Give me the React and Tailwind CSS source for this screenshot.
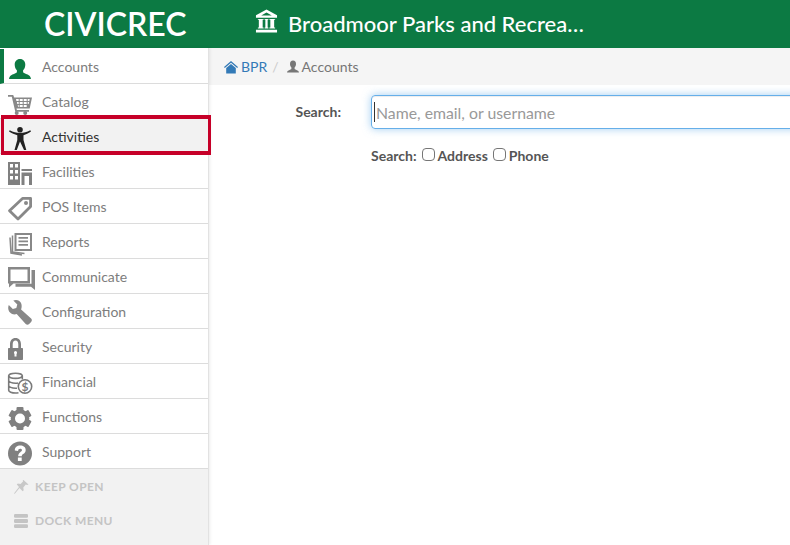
const G = "#888888";
const Svg = ({ children, color = G }) => (
  <span className="flex h-[26px] w-[26px] shrink-0">
    <svg width="26" height="26" viewBox="0 0 26 26" fill={color} className="overflow-visible">{children}</svg>
  </span>
);
const User = ({ color }) => (
  <Svg color={color}>
    <path d="M12 6c3.400 0 5.300 2.500 5.300 5.800 0 2.200-.9 4.300-2.200 5.500v1.700c0 .9 2.500 1.700 4.500 2.600 1.700.8 3 1.800 3.400 4.400H1c.4-2.600 1.700-3.600 3.400-4.400 2-.9 4.500-1.700 4.500-2.600v-1.700c-1.300-1.200-2.200-3.300-2.200-5.500C6.700 8.500 8.600 6 12 6z" />
  </Svg>
);
const Cart = () => (
  <Svg>
    <path d="M0 7h5.200l1 2.500H24l-2.300 11H8.500l.4 1.500H21v1.800H7.300L3.800 8.800H0z" />
    <path fill="#fff" d="M8 11h2.700v2H8.400zM11.700 11h3v2h-3zM15.700 11h3v2h-3zM19.700 11h2l-.4 2h-1.600zM8.900 14h1.800v2H9.300zM11.700 14h3v2h-3zM15.700 14h3v2h-3zM19.700 14h1.400l-.4 2h-1zM9.700 17h1v2h-.6zM11.700 17h3v2h-3zM15.700 17h3v2h-3z" />
    <circle cx="8.700" cy="25" r="2" /><circle cx="17.200" cy="25" r="2" />
  </Svg>
);
const Person = () => (
  <Svg color="#222222">
    <circle cx="12" cy="6.800" r="2.800" />
    <path d="M1 8.500l.7-1.300c3.500 1.700 6.500 2.800 10.300 2.800s6.800-1.100 10.300-2.800l.7 1.300c-2.700 1.800-5 3-7.500 3.800v4.700l2.800 10h-2.300L12 18.500 8.800 27H6.500l2.800-10v-4.700C6.800 11.500 3.700 10.300 1 8.500z" />
  </Svg>
);
const Building = () => (
  <Svg color="#808080">
    <path fillRule="evenodd" d="M0 4h12v23H0zM2 6v3.500h3V6zM7 6v3.500h3V6zM2 12v3.500h3V12zM7 12v3.500h3V12zM2 18v3.500h3V18zM7 18v3.500h3V18z" />
    <path fillRule="evenodd" d="M13.500 11H24v2H13.500zM13.500 14.500H24V27h-3v-9h-4.500v9h-3z" />
  </Svg>
);
const Tag = () => (
  <Svg>
    <path d="M14.500 5.400h8.100v8.100L10 26 1.500 17.800z" fill="none" stroke={G} strokeWidth="2.800" strokeLinejoin="round" />
    <circle cx="18" cy="10" r="2" />
  </Svg>
);
const Report = () => (
  <Svg>
    <path fillRule="evenodd" d="M6.500 5H24v18H6.500zM8.500 7v14H22V7zM10.500 9H20v1.700h-9.500zM10.500 12.500H20v1.700h-9.500zM10.500 16H20v1.700h-9.500z" />
    <path d="M4.500 7.500v16.500l12 1.500M2 9.500l1 15.500 11 2" fill="none" stroke={G} strokeWidth="1.500" />
  </Svg>
);
const Chat = () => (
  <Svg>
    <path fillRule="evenodd" d="M0 4h22v16.500H5.500L1 24.500V20.500H0zM2.500 6.500v11.500h17V6.500z" />
    <path d="M23.500 7H27v20l-4-3.200H7.500v-3h16z" />
  </Svg>
);
const Wrench = () => (
  <Svg>
    <path d="M8 2c-1 0-2 .2-2.700.6l4 4-1 3.500-3.500 1-4-4C.4 8 .2 9 .2 10c0 4.500 4.300 7.500 8.500 6l9 10c1 1 2.500 1 3.400 0l2-2c1-1 1-2.400 0-3.400l-10-9C15 6.400 12.500 2 8 2z" />
  </Svg>
);
const Lock = () => (
  <Svg color="#808080">
    <path fillRule="evenodd" d="M2 15v-3.500C2 7.500 4 5 7.500 5S13 7.500 13 11.500V15h1c.6 0 1 .4 1 1v10c0 .6-.4 1-1 1H1c-.6 0-1-.4-1-1V16c0-.6.4-1 1-1zM4.700 15h5.600v-3.500C10.300 9 9.300 7.500 7.500 7.500S4.700 9 4.700 11.500z" />
    <rect x="6.500" y="19" width="2" height="4.500" fill="#fff" />
    <circle cx="7.500" cy="19.500" r="1.500" fill="#fff" />
  </Svg>
);
const Coins = () => (
  <Svg>
    <g fill="none" stroke="#7a7a7a" strokeWidth="1.600">
      <ellipse cx="7.500" cy="7.800" rx="6.800" ry="2.600" />
      <path d="M.7 7.800v14.500c0 1.400 3 2.700 6.800 2.700 1.200 0 2-.1 3-.3M14.300 7.800v3.500M.7 12.500c0 1.400 3 2.700 6.800 2.700 1 0 1.800-.1 2.500-.3M.7 17.500c0 1.400 3 2.700 6.800 2.700h1.500" />
      <circle cx="17" cy="18.500" r="6.700" />
    </g>
    <text x="17" y="22.700" textAnchor="middle" fontSize="12" fontWeight="700" fill="#7a7a7a" fontFamily="Lato, sans-serif">$</text>
  </Svg>
);
const Gear = () => (
  <Svg color="#808080">
    <circle cx="12" cy="15.500" r="9.300" />
    <rect x="8.500" y="4" width="7" height="23" rx="1" />
    <rect x="8.500" y="4" width="7" height="23" rx="1" transform="rotate(60 12 15.500)" />
    <rect x="8.500" y="4" width="7" height="23" rx="1" transform="rotate(120 12 15.500)" />
    <circle cx="12" cy="15.500" r="5" fill="#fff" />
  </Svg>
);
const Help = () => (
  <Svg color="#808080">
    <circle cx="12" cy="15.500" r="12" />
    <path d="M6.800 12.500C6.800 9.300 9 7.500 12.200 7.500c3.200 0 5.500 1.700 5.500 4.500 0 2.200-1.200 3.200-2.600 4.100-1 .7-1.300 1.200-1.300 2.200h-3.600c0-2.100.7-3.100 2.100-4.100 1-.7 1.700-1.200 1.700-2.100 0-.8-.7-1.400-1.800-1.400-1.200 0-2.100.7-2.100 2.300z" fill="#fff" />
    <rect x="9.900" y="19.500" width="3.800" height="3.500" fill="#fff" />
  </Svg>
);
const Pin = () => (
  <svg width="16" height="16" viewBox="0 0 16 16" fill="#c8c8c8"><path d="M9.500 1l5 4.500-1.300.6-1.400-.6-2.500 3 .4 2.700-1 1L5.500 9 1 14.500 0 15l.5-1.200L5 8 2.800 5.500l1-1 2.700.6 2.500-2.600-.2-1.300z" /></svg>
);
const Bars = () => (
  <svg width="14" height="14" viewBox="0 0 14 14" fill="#c4c4c4"><rect y="0" width="14" height="3.800" rx="1.200" /><rect y="5.100" width="14" height="3.800" rx="1.200" /><rect y="10.200" width="14" height="3.800" rx="1.200" /></svg>
);
const Bank = () => (
  <svg className="-mt-[7px]" width="23" height="24" viewBox="0 0 24 24" fill="#fff"><path fillRule="evenodd" d="M12 0L1 6v2.500h22V6zM12 3.200l5.500 3H6.500zM3 10v.8h1v8H3v1h6v-1H8v-8h1V10zM10 10v.8h.8v8H10v1h4v-1h-.8v-8h.8V10zM15 10v.8h1v8h-1v1h6v-1h-1v-8h1V10zM1 21h22v3H1z" /></svg>
);

const items = [
  ["Accounts", <User color="#0c7a43" />],
  ["Catalog", <Cart />],
  ["Activities", <Person />],
  ["Facilities", <Building />],
  ["POS Items", <Tag />],
  ["Reports", <Report />],
  ["Communicate", <Chat />],
  ["Configuration", <Wrench />],
  ["Security", <Lock />],
  ["Financial", <Coins />],
  ["Functions", <Gear />],
  ["Support", <Help />],
];

export default function App() {
  return (
    <div className="relative flex flex-col h-[545px] w-[790px] overflow-hidden bg-white font-['Lato',sans-serif]">
      <header className="flex h-12 items-center bg-[#0c7a43] text-white shrink-0">
        <div className="w-[255px] pl-11 text-[32px] leading-none font-semibold">CIVICREC</div>
        <Bank />
        <div className="ml-[10px] text-[22px] leading-none font-medium">Broadmoor Parks and Recrea…</div>
      </header>
      <div className="flex flex-1 min-h-0">
        <nav className="flex w-[209px] shrink-0 flex-col border-r border-[#e2e2e2] pt-px shadow-[1px_0_3px_rgba(0,0,0,0.08)] z-10 bg-white">
          {items.map(([label, icon], i) => (
            <div
              key={label}
              className={
                i === 2
                  ? "flex h-[35px] items-center gap-[8px] border-b border-[#dcdcdc] bg-[#f2f2f2] pl-2 text-sm text-[#333]"
                  : i === 0
                  ? "flex h-[35px] items-center gap-[8px] border-b border-l-4 border-[#dcdcdc] border-l-[#0c7a43] pl-[4px] text-sm text-[#7d7d7d]"
                  : "flex h-[35px] items-center gap-[8px] border-b border-[#dcdcdc] pl-2 text-sm text-[#7d7d7d]"
              }
            >
              {icon}
              <span className="mt-[2px]">{label}</span>
            </div>
          ))}
          <div className="flex flex-1 flex-col bg-[#f2f2f2] pl-[14px] pt-[9px] text-xs font-bold tracking-[0.4px] text-[#c4c4c4]">
            <div className="flex h-[17px] items-center gap-[5px]"><Pin /><span>KEEP OPEN</span></div>
            <div className="mt-[17px] flex h-[17px] items-center gap-[7px]"><Bars /><span>DOCK MENU</span></div>
          </div>
        </nav>
        <main className="flex-1 min-w-0">
          <div className="flex h-[37px] items-center bg-[#f5f5f5] pl-[15px] text-sm">
            <svg width="14" height="14" viewBox="0 0 14 14" fill="#337ab7"><path d="M7 1L0 7l.8.900L7 2.800l6.200 5.100.8-.900zM2.200 8L7 4l4.800 4v5.500H2.200z" /></svg>
            <span className="ml-[3px] text-[#337ab7]">BPR</span>
            <span className="ml-[5px] text-[#ccc]">/</span>
            <svg className="ml-[7px]" width="14" height="14" viewBox="0 0 14 14" fill="#777"><path d="M7 .5c2 0 3 1.500 3 3.500 0 1.500-.6 2.800-1.400 3.500v1.300c0 .6 1.600 1 2.800 1.700.9.400 1.400 1 1.600 2H1c.2-1 .7-1.600 1.600-2 1.200-.7 2.800-1.100 2.800-1.700V7.500C4.600 6.800 4 5.500 4 4c0-2 1-3.500 3-3.500z" /></svg>
            <span className="ml-[2px] text-[#777]">Accounts</span>
          </div>
          <div className="flex items-start pt-[10px]">
            <label className="w-[132px] pt-[7px] text-right text-sm leading-5 font-bold text-[#555]">Search:</label>
            <div className="ml-[30px] flex-1 min-w-0">
              <div className="flex h-[34px] w-[500px] items-center rounded-l border border-[#66afe9] pl-[2px] text-[15.8px] text-[#999] shadow-[inset_0_1px_1px_rgba(0,0,0,0.075),0_0_8px_rgba(102,175,233,0.6)]">
                <span className="h-5 w-px bg-[#333]" />
                <span className="mt-[2px] ml-px">Name, email, or username</span>
              </div>
              <div className="mt-[17px] flex h-5 items-center text-sm font-bold text-[#555]">
                <span>Search:</span>
                <span className="ml-[5px] -mt-[3px] h-[13px] w-[13px] rounded-sm border border-[#767676] bg-white" />
                <span className="ml-[3px]">Address</span>
                <span className="ml-[5px] -mt-[3px] h-[13px] w-[13px] rounded-sm border border-[#767676] bg-white" />
                <span className="ml-[3px]">Phone</span>
              </div>
            </div>
          </div>
        </main>
      </div>
      <div className="absolute left-[1px] top-[115px] z-20 h-[40px] w-[210px] border-x-[3px] border-y-[4px] border-[#c60028]" />
    </div>
  );
}
